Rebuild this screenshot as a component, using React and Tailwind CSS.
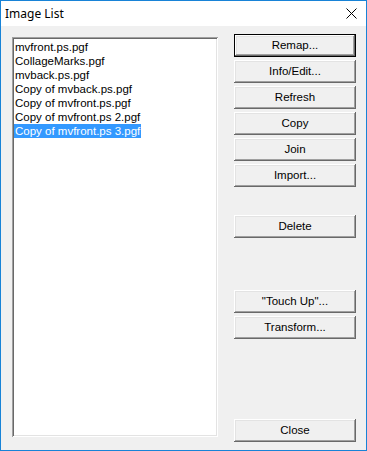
import React, { useState } from 'react';

const files = [
  'mvfront.ps.pgf',
  'CollageMarks.pgf',
  'mvback.ps.pgf',
  'Copy of mvback.ps.pgf',
  'Copy of mvfront.ps.pgf',
  'Copy of mvfront.ps 2.pgf',
  'Copy of mvfront.ps 3.pgf',
];

const font = { fontFamily: '"Liberation Sans", Arial, sans-serif' };

const Btn = ({ children, isDefault, className = '' }) => (
  <button
    className={`h-[23px] w-[122px] text-[11.5px] text-black bg-[#f0f0f0] flex items-center justify-center ${
      isDefault
        ? 'border border-black shadow-[inset_-1px_-1px_#696969,inset_1px_1px_#fff,inset_-2px_-2px_#a0a0a0,inset_2px_2px_#e3e3e3]'
        : 'shadow-[inset_-1px_-1px_#696969,inset_1px_1px_#fff,inset_-2px_-2px_#a0a0a0,inset_2px_2px_#e3e3e3]'
    } ${className}`}
  >
    {children}
  </button>
);

const App = () => {
  const [selected, setSelected] = useState(6);

  return (
    <div className="w-[367px] h-[451px] border border-[#1883d7] bg-[#f0f0f0] flex flex-col" style={font}>
      <div className="h-[25px] bg-white flex items-center justify-between pl-[4px] pr-[9px]">
        <span className="text-[12px] text-black" style={{ fontFamily: '"Noto Sans", sans-serif' }}>Image List</span>
        <svg width="11" height="11" viewBox="0 0 11 11">
          <path d="M0.5 0.5 L10.5 10.5 M10.5 0.5 L0.5 10.5" stroke="#000" strokeWidth="1" />
        </svg>
      </div>

      <div className="flex-1 flex pt-[8px] pb-[8px] pl-[11px] pr-[10px]">
        <div className="mt-[3px] h-[400px] w-[206px] bg-white p-[2px] shadow-[inset_1px_1px_#a0a0a0,inset_-1px_-1px_#fff,inset_2px_2px_#696969,inset_-2px_-2px_#e3e3e3]">
          <div className="pt-[1px]">
            {files.map((f, i) => (
              <div key={f} className="h-[14px] flex" onClick={() => setSelected(i)}>
                <span
                  className={`text-[11.5px] leading-[14px] px-[1px] whitespace-nowrap ${
                    i === selected ? 'bg-[#3399ff] text-white' : 'text-black'
                  }`}
                >
                  {f}
                </span>
              </div>
            ))}
          </div>
        </div>

        <div className="ml-[16px] flex flex-col">
          <Btn isDefault>Remap...</Btn>
          <Btn className="mt-[3px]">Info/Edit...</Btn>
          <Btn className="mt-[3px]">Refresh</Btn>
          <Btn className="mt-[3px]">Copy</Btn>
          <Btn className="mt-[3px]">Join</Btn>
          <Btn className="mt-[3px]">Import...</Btn>
          <Btn className="mt-[28px]">Delete</Btn>
          <Btn className="mt-[52px]">"Touch Up"...</Btn>
          <Btn className="mt-[3px]">Transform...</Btn>
          <Btn className="mt-auto">Close</Btn>
        </div>
      </div>
    </div>
  );
};

export default App;
